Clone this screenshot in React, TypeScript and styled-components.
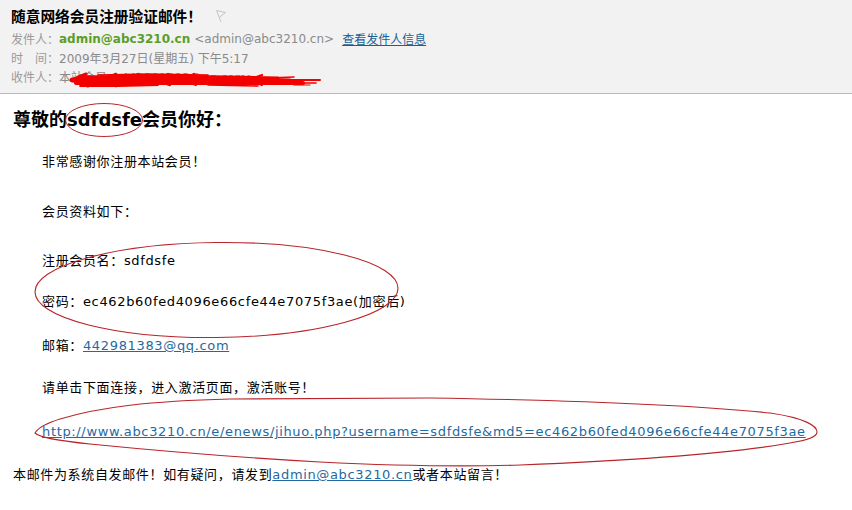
import React from "react";
import styled, { createGlobalStyle } from "styled-components";

const Global = createGlobalStyle`
  html, body { margin: 0; padding: 0; background: #ffffff; }
  body { font-family: "DejaVu Sans", "Noto Sans CJK SC", sans-serif; }
`;

const Page = styled.div`
  width: 852px;
  min-height: 510px;
  background: #ffffff;
`;

const Header = styled.header`
  background: #f2f2f2;
  border-bottom: 1px solid #b9b9b9;
  padding: 6px 0 7px 11px;
  display: flex;
  flex-direction: column;
`;

const TitleRow = styled.div`
  display: flex;
  align-items: center;
  gap: 13px;
  height: 20px;
  margin-bottom: 3px;
`;

const Title = styled.h1`
  margin: 0;
  font-size: 14.7px;
  font-weight: bold;
  color: #000;
  font-family: "Noto Sans CJK SC", sans-serif;
  line-height: 20px;
`;

const MetaRow = styled.div`
  position: relative;
  display: flex;
  align-items: center;
  height: 19px;
  font-size: 12px;
  color: #8c8c8c;
  white-space: nowrap;
`;

const Label = styled.span`
  font-family: "Noto Sans CJK SC", sans-serif;
  color: #9a9a9a;
`;

const Sender = styled.span`
  font-weight: bold;
  color: #5a9e2a;
  margin-right: 4px;
`;

const Value = styled.span`
  color: #8a8a8a;
`;

const HeaderLink = styled.a`
  margin-left: 8px;
  color: #1b5f91;
  text-decoration: underline;
  font-family: "Noto Sans CJK SC", sans-serif;
`;

const Scribble = styled.svg`
  position: absolute;
  left: 47px;
  top: 4px;
  overflow: visible;
`;

const Body = styled.main`
  padding: 14px 0 0 13px;
  color: #000;
`;

const Greeting = styled.h2`
  margin: 0;
  font-size: 18px;
  line-height: 24px;
  font-weight: bold;
  font-family: "DejaVu Sans", "Noto Sans CJK SC", sans-serif;
`;

const Circled = styled.span`
  position: relative;
  display: inline-block;
`;

const Ring = styled.svg`
  position: absolute;
  left: -2px;
  top: 50%;
  margin-top: -17px;
  overflow: visible;
  pointer-events: none;
`;

const Para = styled.p<{ $gap: number; $indent?: boolean }>`
  margin: ${(p) => p.$gap}px 0 0 0;
  padding-left: ${(p) => (p.$indent === false ? 0 : 29)}px;
  font-size: 13px;
  letter-spacing: 0.65px;
  line-height: 20px;
  white-space: nowrap;
`;

const Group = styled.div<{ $gap: number }>`
  position: relative;
  margin-top: ${(p) => p.$gap}px;
`;

const Outline = styled.svg`
  position: absolute;
  overflow: visible;
  pointer-events: none;
`;

const Link = styled.a`
  color: #1f6aa0;
  text-decoration: underline;
`;

function Flag() {
  return (
    <svg width="12" height="14" viewBox="0 0 12 14">
      <path
        d="M1.5 1.5 L6 13 M1.5 1.5 L10.5 3.5 L4.3 8.3"
        fill="none"
        stroke="#c4c4c4"
        strokeWidth="1"
      />
    </svg>
  );
}

function RedScribble() {
  const red = "#f20000";
  return (
    <Scribble width="270" height="20" viewBox="0 0 270 20">
      <g fill="none" stroke={red} strokeLinecap="round" strokeLinejoin="round">
        <path d="M14 9 L70 8 L140 8 L200 9 L232 10" strokeWidth="5" />
        <path d="M18 12 L90 12 L160 12 L225 12 L245 12" strokeWidth="4" />
        <path d="M20 6 L100 5 L170 6 L220 7" strokeWidth="3" />
        <path d="M40 4 L90 3 L150 4" strokeWidth="1.6" />
        <path d="M230 9 L262 9" strokeWidth="2" />
        <path d="M232 12 L258 12" strokeWidth="1.6" />
        <path d="M236 14 L252 14" strokeWidth="1.2" />
        <path d="M210 7 L236 6" strokeWidth="1.5" />
        <path d="M14 9 L28 3 M14 9 L30 15" strokeWidth="3" />
        <path d="M44 9 L58 3 M44 9 L58 15" strokeWidth="2.6" />
        <path d="M68 9 L80 3 M68 9 L80 14" strokeWidth="2.4" />
        <path d="M98 9 L110 3 M98 9 L112 14" strokeWidth="2.4" />
        <path d="M124 9 L136 3 M124 9 L138 14" strokeWidth="2.2" />
        <path d="M190 9 L204 4 M190 9 L204 14" strokeWidth="2.2" />
        <path d="M22 15 L60 15 L100 14" strokeWidth="1.8" />
        <path d="M150 14 L200 15" strokeWidth="1.6" />
      </g>
    </Scribble>
  );
}

export default function App() {
  return (
    <Page>
      <Global />
      <Header>
        <TitleRow>
          <Title>随意网络会员注册验证邮件！</Title>
          <Flag />
        </TitleRow>
        <MetaRow>
          <Label>发件人：</Label>
          <Sender>admin@abc3210.cn</Sender>
          <Value>&lt;admin@abc3210.cn&gt;</Value>
          <HeaderLink href="#">查看发件人信息</HeaderLink>
        </MetaRow>
        <MetaRow>
          <Label>时&emsp;间：</Label>
          <Value>2009年3月27日(星期五) 下午5:17</Value>
        </MetaRow>
        <MetaRow>
          <Label>收件人：</Label>
          <Value>本站会员 &lt;442981383@qq.com&gt;</Value>
          <RedScribble />
        </MetaRow>
      </Header>
      <Body>
        <Greeting>
          尊敬的
          <Circled>
            sdfdsfe
            <Ring width="78" height="34" viewBox="0 0 78 34">
              <ellipse cx="39" cy="17" rx="38.5" ry="16.5" fill="none" stroke="#b8242a" strokeWidth="1" />
            </Ring>
          </Circled>
          会员你好：
        </Greeting>
        <Para $gap={20}>非常感谢你注册本站会员！</Para>
        <Para $gap={30}>会员资料如下：</Para>
        <Group $gap={29}>
          <Para $gap={0}>注册会员名：sdfdsfe</Para>
          <Para $gap={21}>密码：ec462b60fed4096e66cfe44e7075f3ae(加密后)</Para>
          <Outline width="366" height="98" viewBox="0 0 366 98" style={{ left: 21, top: -9 }}>
            <ellipse cx="182.5" cy="48" rx="181.5" ry="47.5" fill="none" stroke="#b8242a" strokeWidth="1.1" transform="rotate(-0.6 182.5 48)" />
          </Outline>
        </Group>
        <Para $gap={24}>
          邮箱：<Link href="#">442981383@qq.com</Link>
        </Para>
        <Para $gap={22}>请单击下面连接，进入激活页面，激活账号！</Para>
        <Group $gap={24}>
          <Para $gap={0}>
            <Link href="#">
              http://www.abc3210.cn/e/enews/jihuo.php?username=sdfdsfe&amp;md5=ec462b60fed4096e66cfe44e7075f3ae
            </Link>
          </Para>
          <Outline width="790" height="72" viewBox="30 396 790 72" style={{ left: 17, top: -26 }}>
            <path
              d="M35 433 C 38 428, 44 424, 60 419 C 100 407, 150 401, 230 399 L 430 398 C 560 400, 690 405, 770 413 C 805 418, 817 426, 817 432 C 817 437, 808 440, 790 443 C 740 452, 640 460, 520 465 C 460 467, 400 466, 320 462 C 230 457, 150 450, 90 444 C 60 441, 40 438, 35 433 Z"
              fill="none"
              stroke="#b8242a"
              strokeWidth="1.1"
            />
          </Outline>
        </Group>
        <Para $gap={23} $indent={false}>
          本邮件为系统自发邮件！如有疑问，请发到<Link href="#">admin@abc3210.cn</Link>或者本站留言！
        </Para>
      </Body>
    </Page>
  );
}
